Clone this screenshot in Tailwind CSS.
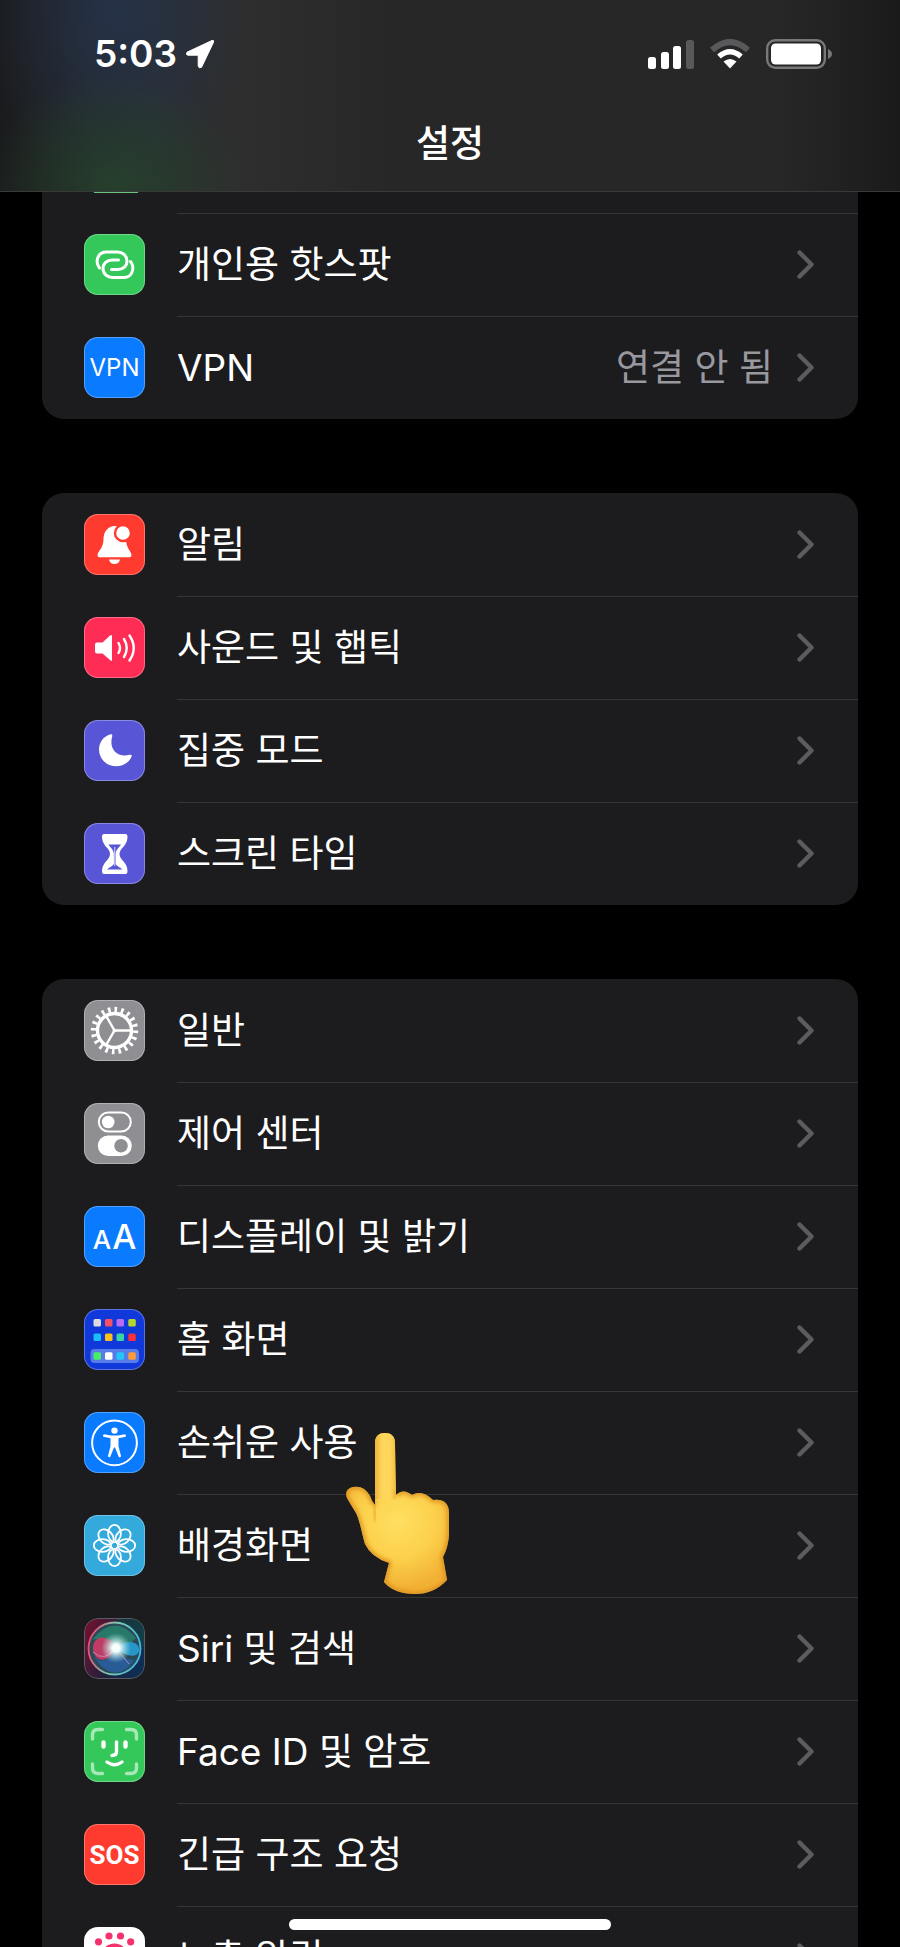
<!DOCTYPE html>
<html lang="ko">
<head>
  <meta charset="UTF-8" />
  <title>설정</title>
  <meta name="viewport" content="width=device-width, initial-scale=1.0" />
  <script src="https://cdn.jsdelivr.net/npm/@tailwindcss/browser@4"></script>
</head>
<body class="bg-black text-white font-['Inter','Noto_Sans_CJK_KR',sans-serif]">

<!-- Shared chevron -->
<svg class="hidden">
  <symbol id="chevron" viewBox="0 0 17 29">
    <path d="M2.5 2.5 14.5 14.5 2.5 26.5" fill="none" stroke="#5c5c60" stroke-width="4.4" stroke-linecap="round" stroke-linejoin="round" />
  </symbol>
</svg>

<div class="relative h-screen overflow-hidden flex flex-col">

  <!-- Header -->
  <header class="shrink-0 border-b border-[#39393a] bg-[radial-gradient(ellipse_130px_110px_at_115px_185px,#26452ccc,transparent),radial-gradient(ellipse_130px_190px_at_115px_10px,#263450cc,transparent),linear-gradient(90deg,#1a1b1d_0px,#1d1f20_30px,#2a2d2e_160px,#2e2e2f_240px,#272728_400px,#272728_780px,#202021_850px,#1a1a1b_100%)]">
    <div class="h-[107px] pl-[94px] pr-[68px] flex items-center">
      <span class="text-[37px] font-semibold">5:03</span>
      <svg class="ml-2 w-[30px] h-[30px]" viewBox="0 0 30 30">
        <path d="M27 1.5 2 13.2Q.5 16 3 16.2H13.2V27Q14 30 16.6 28.2L28.6 3Q29 .8 27 1.5Z" fill="#fff" stroke="#fff" stroke-linejoin="round" />
      </svg>
      <div class="ml-auto flex items-center gap-4">
        <svg class="w-[46px] h-[30px]" viewBox="0 0 46 30" fill="#fff">
          <rect x="0" y="18" width="8" height="12" rx="2.5" />
          <rect x="13" y="13" width="8" height="17" rx="2.5" />
          <rect x="25" y="7" width="8" height="23" rx="2.5" />
          <rect x="38" y="1" width="8" height="29" rx="2.5" fill="#59595b" />
        </svg>
        <svg class="w-10 h-[30px]" viewBox="0 0 40 30" fill="none">
          <path d="M2 11Q20-5 38 11" stroke="#59595b" stroke-width="6" />
          <path d="M9 17.5Q20 8 31 17.5" stroke="#fff" stroke-width="5.5" />
          <path d="M13.5 22.5Q20 17.5 26.5 22.5L20 29.5Z" fill="#fff" />
        </svg>
        <svg class="w-[66px] h-[30px]" viewBox="0 0 66 30">
          <rect x="1.2" y="1.2" width="57.6" height="27.6" rx="8" fill="none" stroke="#78787a" stroke-width="2.4" />
          <rect x="5" y="4.5" width="50" height="21" rx="4.5" fill="#fff" />
          <path d="M62 10Q66 12 66 15T62 20Z" fill="#78787a" />
        </svg>
      </div>
    </div>
    <h1 class="h-[84px] pb-3 flex items-center justify-center text-[37px] font-medium leading-none">설정</h1>
  </header>

  <!-- Settings list -->
  <main class="flex-1 px-[42px] flex flex-col gap-[74px] text-[37px] leading-none">

    <section class="shrink-0 rounded-b-[22px] bg-[#1c1c1e]">
      <!-- row scrolled under the header -->
      <div class="h-[21px] pl-[52px]">
        <div class="w-11 h-px bg-[#6cc080]"></div>
      </div>

      <a href="#" class="flex h-[103px] items-center pl-[42px]">
        <svg class="w-[61px] h-[61px] rounded-[14px] bg-[#34c759] inset-ring inset-ring-white/30" viewBox="0 0 61 61" fill="none" stroke="#fff" stroke-width="3" stroke-linecap="round">
          <path d="M15.5 34C10.5 27.5 14 18 22 18H33C39 18 43 22 43 27C43 32 39 35.5 34 35.5H27.5" />
          <path d="M15.5 34C10.5 27.5 14 18 22 18H33C39 18 43 22 43 27C43 32 39 35.5 34 35.5H27.5" transform="rotate(180 31 30.75)" />
        </svg>
        <span class="ml-8 flex h-full flex-1 items-center border-t border-[#353537] pb-0.5 pr-11">
          개인용 핫스팟
          <svg class="ml-auto w-[17px] h-[29px]"><use href="#chevron" /></svg>
        </span>
      </a>

      <a href="#" class="flex h-[103px] items-center pl-[42px]">
        <span class="flex w-[61px] h-[61px] items-center justify-center rounded-[14px] bg-[#0a7aff] text-[24px] inset-ring inset-ring-white/30">VPN</span>
        <span class="ml-8 flex h-full flex-1 items-center border-t border-[#353537] pb-0.5 pr-11">
          VPN
          <span class="ml-auto mr-6 text-[#98989e]">연결 안 됨</span>
          <svg class="w-[17px] h-[29px]"><use href="#chevron" /></svg>
        </span>
      </a>
    </section>

    <section class="shrink-0 rounded-[22px] bg-[#1c1c1e]">
      <a href="#" class="flex h-[103px] items-center pl-[42px]">
        <svg class="w-[61px] h-[61px] rounded-[14px] bg-[#ff3b30] inset-ring inset-ring-white/30" viewBox="0 0 61 61" fill="#fff">
          <path d="M30.5 12C25 12 19.5 17 19.5 25C19.5 34 14 37 13.5 41Q13.5 43.3 15.5 43.3H45.500Q47.8 43.3 47.5 41C47 37 42 34 42 25V20L36 12Z" />
          <path d="M25 45.5H36C35 51.5 26 51.5 25 45.5Z" />
          <circle cx="39" cy="19" r="8" fill="#fff" stroke="#ff3b30" stroke-width="2.4" />
        </svg>
        <span class="ml-8 flex h-full flex-1 items-center pr-11">
          알림
          <svg class="ml-auto w-[17px] h-[29px]"><use href="#chevron" /></svg>
        </span>
      </a>

      <a href="#" class="flex h-[103px] items-center pl-[42px]">
        <svg class="w-[61px] h-[61px] rounded-[14px] bg-[#ff2d55] inset-ring inset-ring-white/30" viewBox="0 0 61 61" fill="none" stroke="#fff" stroke-width="2.4" stroke-linecap="round">
          <path d="M13 25.5H18.5L26 18.5Q28 17 28 19.5V42.5Q28 45 26 43L18.5 36.5H13Q11 36.5 11 34.5V27.5Q11 25.5 13 25.5Z" fill="#fff" stroke="none" />
          <path d="M34.5 26Q37.5 31 34.5 36M40 22Q45.5 31 40 40M45.5 18.5Q54 31 45.5 43.5" />
        </svg>
        <span class="ml-8 flex h-full flex-1 items-center border-t border-[#353537] pb-0.5 pr-11">
          사운드 및 햅틱
          <svg class="ml-auto w-[17px] h-[29px]"><use href="#chevron" /></svg>
        </span>
      </a>

      <a href="#" class="flex h-[103px] items-center pl-[42px]">
        <svg class="w-[61px] h-[61px] rounded-[14px] bg-[#5856d6] inset-ring inset-ring-white/30" viewBox="0 0 61 61" fill="#fff">
          <path d="M26.5 14.200C14 18 11.5 33 20 41.5C29 50 44 46.5 47.8 36Q47.8 34.2 45.5 34.8C33 38 24.5 29 28.3 16Q28.5 13.8 26.5 14.2Z" />
        </svg>
        <span class="ml-8 flex h-full flex-1 items-center border-t border-[#353537] pb-0.5 pr-11">
          집중 모드
          <svg class="ml-auto w-[17px] h-[29px]"><use href="#chevron" /></svg>
        </span>
      </a>

      <a href="#" class="flex h-[103px] items-center pl-[42px]">
        <svg class="w-[61px] h-[61px] rounded-[14px] bg-[#5856d6] inset-ring inset-ring-white/30" viewBox="0 0 61 61" fill="#fff">
          <path d="M20 11H41.5Q43.5 11 43.5 14C43.5 23 35.5 25 35.5 31S43.5 39 43.5 48Q43.5 51 41.5 51H20Q18 51 18 48C18 39 26 37 26 31S18 23 18 14Q18 11 20 11Z" />
          <path d="M24.5 21.5H37C35 25 32 26 31.6 31V40.5C32 43 36 44 38.5 46.5H23C25.500 44 29.5 43 29.9 40.5V31C29.5 26 26.5 25 24.5 21.5Z" fill="#5856d6" />
          <path d="M30.75 24V43" stroke="#fff" stroke-width=".8" />
        </svg>
        <span class="ml-8 flex h-full flex-1 items-center border-t border-[#353537] pb-0.5 pr-11">
          스크린 타임
          <svg class="ml-auto w-[17px] h-[29px]"><use href="#chevron" /></svg>
        </span>
      </a>
    </section>

    <section class="shrink-0 rounded-t-[22px] bg-[#1c1c1e]">
      <a href="#" class="flex h-[103px] items-center pl-[42px]">
        <svg class="w-[61px] h-[61px] rounded-[14px] bg-[#8e8e93] inset-ring inset-ring-white/30" viewBox="0 0 61 61" fill="none" stroke="#fff">
          <circle cx="30.5" cy="30.5" r="21" stroke-width="5.4" pathLength="40" stroke-dasharray=".8 1.2" />
          <circle cx="30.5" cy="30.5" r="17" stroke-width="3.400" />
          <path d="M30.5 30.5H48M30.5 30.5 21.75 15.35M30.5 30.5 21.75 45.65" stroke-width="2.4" />
          <circle cx="30.5" cy="30.5" r="1.5" fill="#fff" />
        </svg>
        <span class="ml-8 flex h-full flex-1 items-center pr-11">
          일반
          <svg class="ml-auto w-[17px] h-[29px]"><use href="#chevron" /></svg>
        </span>
      </a>

      <a href="#" class="flex h-[103px] items-center pl-[42px]">
        <svg class="w-[61px] h-[61px] rounded-[14px] bg-[#8e8e93] inset-ring inset-ring-white/30" viewBox="0 0 61 61" fill="#fff">
          <rect x="14.8" y="9.5" width="32" height="19" rx="9.5" fill="none" stroke="#fff" stroke-width="2" />
          <circle cx="24.2" cy="19" r="6.3" />
          <rect x="13.8" y="32.5" width="34" height="20.5" rx="10.25" />
          <circle cx="37" cy="42.75" r="6.8" fill="#8e8e93" />
        </svg>
        <span class="ml-8 flex h-full flex-1 items-center border-t border-[#353537] pb-0.5 pr-11">
          제어 센터
          <svg class="ml-auto w-[17px] h-[29px]"><use href="#chevron" /></svg>
        </span>
      </a>

      <a href="#" class="flex h-[103px] items-center pl-[42px]">
        <span class="flex w-[61px] h-[61px] items-baseline justify-center gap-px rounded-[14px] bg-[#0a7aff] pt-[14px] font-medium inset-ring inset-ring-white/30">
          <span class="text-[26px]">A</span><span class="text-[34px]">A</span>
        </span>
        <span class="ml-8 flex h-full flex-1 items-center border-t border-[#353537] pb-0.5 pr-11">
          디스플레이 및 밝기
          <svg class="ml-auto w-[17px] h-[29px]"><use href="#chevron" /></svg>
        </span>
      </a>

      <a href="#" class="flex h-[103px] items-center pl-[42px]">
        <svg class="w-[61px] h-[61px] rounded-[14px] bg-[#1138d8] inset-ring inset-ring-white/30" viewBox="0 0 61 61">
          <rect x="6.5" y="40" width="48.5" height="14" rx="4" fill="#567cea" />
          <rect x="9.5" y="10" width="7.5" height="7.5" rx="1.5" fill="#dcdce0" />
          <rect x="21" y="10" width="7.5" height="7.5" rx="1.5" fill="#fc4f60" />
          <rect x="32.5" y="10" width="7.5" height="7.5" rx="1.5" fill="#b86cf5" />
          <rect x="44.3" y="10" width="7.5" height="7.5" rx="1.5" fill="#b5d62f" />
          <rect x="9.5" y="24.5" width="7.5" height="7.5" rx="1.5" fill="#19bdf8" />
          <rect x="21" y="24.5" width="7.5" height="7.5" rx="1.5" fill="#fdc019" />
          <rect x="32.5" y="24.5" width="7.5" height="7.5" rx="1.5" fill="#34d6a3" />
          <rect x="44.3" y="24.5" width="7.5" height="7.5" rx="1.5" fill="#fc3038" />
          <rect x="9.5" y="43.3" width="7.5" height="7.5" rx="1.5" fill="#46ee6a" />
          <rect x="21" y="43.3" width="7.5" height="7.5" rx="1.5" fill="#fff" />
          <rect x="32.5" y="43.3" width="7.5" height="7.5" rx="1.5" fill="#22c6fb" />
          <rect x="44.3" y="43.3" width="7.5" height="7.5" rx="1.5" fill="#fd9a3c" />
        </svg>
        <span class="ml-8 flex h-full flex-1 items-center border-t border-[#353537] pb-0.5 pr-11">
          홈 화면
          <svg class="ml-auto w-[17px] h-[29px]"><use href="#chevron" /></svg>
        </span>
      </a>

      <a href="#" class="relative flex h-[103px] items-center pl-[42px]">
        <svg class="w-[61px] h-[61px] rounded-[14px] bg-[#0a7aff] inset-ring inset-ring-white/30" viewBox="0 0 61 61" fill="#fff">
          <circle cx="30.5" cy="30.8" r="22.4" fill="none" stroke="#fff" stroke-width="2" />
          <circle cx="30.5" cy="18.6" r="3.2" />
          <path d="M20 22.300 27 23.5H34L41 22.3Q43 23.5 41.5 24.8L34.500 26.3V34L37 44Q36.5 46 34.8 45L31 35.5H30L26.2 45Q24.5 46 24 44L26.500 34V26.3L19.5 24.8Q18 23.5 20 22.3Z" />
        </svg>
        <span class="ml-8 flex h-full flex-1 items-center border-t border-[#353537] pb-0.5 pr-11">
          손쉬운 사용
          <svg class="ml-auto w-[17px] h-[29px]"><use href="#chevron" /></svg>
        </span>

        <!-- Pointing hand over the list -->
        <svg class="absolute left-[304px] top-[42px] z-10 w-[104px] h-[161px]" viewBox="0 0 104 161">
          <defs>
            <radialGradient id="skin" gradientUnits="userSpaceOnUse" cx="52" cy="88" r="68">
              <stop offset="0" stop-color="#ffdf62" />
              <stop offset=".55" stop-color="#fcd04b" />
              <stop offset="1" stop-color="#f2b034" />
            </radialGradient>
            <linearGradient id="finger" x1="0" x2="1">
              <stop offset="0" stop-color="#eeb438" />
              <stop offset=".35" stop-color="#fdd75b" />
              <stop offset=".75" stop-color="#fdd55a" />
              <stop offset="1" stop-color="#f4bf42" />
            </linearGradient>
            <filter id="soft"><feGaussianBlur stdDeviation="2" /></filter>
            <clipPath id="hand">
              <path d="M29 72V10C29 3 33 0 39 0S49 3 49 10L50 62Q57 55 66 62Q76 56 87 67Q102 65 103 79V102Q102 115 97 124L101 147Q88 161 69 161Q48 161 38 149L43 130Q25 124 19 111C16 101 14 88 10 80Q5 72 1 65Q-2 56 7 54Q18 52 24 63Q26 69 29 72Z" />
            </clipPath>
          </defs>
          <g clip-path="url(#hand)">
            <rect width="104" height="161" fill="url(#skin)" />
            <rect x="29" width="20.5" height="66" fill="url(#finger)" />
            <path d="M50 62Q57 55 66 62Q76 56 87 67Q102 65 103 79V102Q102 115 97 124L101 147Q88 161 69 161Q48 161 38 149L43 130Q25 124 19 111C16 101 14 88 10 80Q5 72 1 65Q-2 56 7 54Q18 52 24 63Q26 69 29 72" fill="none" stroke="#d98d1c" stroke-width="4" filter="url(#soft)" />
            <path d="M28 70Q31 78 29 88" fill="none" stroke="#e5a32b" stroke-width="3" filter="url(#soft)" />
          </g>
        </svg>
      </a>

      <a href="#" class="flex h-[103px] items-center pl-[42px]">
        <svg class="w-[61px] h-[61px] rounded-[14px] bg-[#34aadc] inset-ring inset-ring-white/30" viewBox="0 0 61 61" fill="none" stroke="#fff" stroke-width="1.8">
          <ellipse cx="30.5" cy="18.5" rx="6.4" ry="8.7" />
          <ellipse cx="30.5" cy="18.5" rx="6.4" ry="8.7" transform="rotate(45 30.5 30.5)" />
          <ellipse cx="30.5" cy="18.5" rx="6.4" ry="8.7" transform="rotate(90 30.5 30.5)" />
          <ellipse cx="30.5" cy="18.5" rx="6.4" ry="8.7" transform="rotate(135 30.5 30.5)" />
          <ellipse cx="30.5" cy="18.5" rx="6.4" ry="8.7" transform="rotate(180 30.5 30.5)" />
          <ellipse cx="30.5" cy="18.5" rx="6.4" ry="8.7" transform="rotate(225 30.5 30.5)" />
          <ellipse cx="30.5" cy="18.5" rx="6.4" ry="8.7" transform="rotate(270 30.5 30.5)" />
          <ellipse cx="30.5" cy="18.5" rx="6.4" ry="8.7" transform="rotate(315 30.5 30.5)" />
        </svg>
        <span class="ml-8 flex h-full flex-1 items-center border-t border-[#353537] pb-0.5 pr-11">
          배경화면
          <svg class="ml-auto w-[17px] h-[29px]"><use href="#chevron" /></svg>
        </span>
      </a>

      <a href="#" class="flex h-[103px] items-center pl-[42px]">
        <svg class="w-[61px] h-[61px] rounded-[14px]" viewBox="0 0 61 61">
          <defs>
            <linearGradient id="siriBack" x1="0" y1=".3" x2="1" y2=".7">
              <stop offset="0" stop-color="#6b1230" />
              <stop offset=".5" stop-color="#20203c" />
              <stop offset="1" stop-color="#0e2f54" />
            </linearGradient>
            <linearGradient id="siriRing" x1="0" y1=".4" x2="1" y2=".6">
              <stop offset="0" stop-color="#f0476f" />
              <stop offset=".45" stop-color="#7cc9b0" />
              <stop offset="1" stop-color="#3fb6e8" />
            </linearGradient>
            <radialGradient id="siriGlow">
              <stop offset="0" stop-color="#fff" />
              <stop offset=".25" stop-color="#f2fffd" />
              <stop offset="1" stop-color="#9fe0dc" stop-opacity="0" />
            </radialGradient>
          </defs>
          <rect x=".5" y=".5" width="60" height="60" rx="13.5" fill="url(#siriBack)" stroke="#5b5b66" />
          <path d="M32 1H47Q60 1 60 14V30Z" fill="#0f5040" opacity=".5" />
          <circle cx="30.5" cy="30.5" r="26" fill="#2a4a58" stroke="url(#siriRing)" stroke-width="1.8" />
          <path d="M8 22Q30-6 52 20Q44 28 32 30Q20 18 8 22Z" fill="#27836c" opacity=".85" />
          <path d="M32 30C24 14 8 18 9 31S24 47 32 30Z" fill="#d83a68" opacity=".85" />
          <path d="M32 31C24 46 14 44 10 38Q20 57 36 54Q46 50 50 42Q38 42 32 31Z" fill="#2760a8" opacity=".8" />
          <path d="M32 30C40 22 54 22 55 31S42 40 32 30Z" fill="#26a4dc" opacity=".85" />
          <path d="M9 34Q20 45 32 30L45 46" fill="none" stroke="#d9a4d8" stroke-width="1" opacity=".7" />
          <circle cx="32" cy="30" r="15" fill="url(#siriGlow)" />
        </svg>
        <span class="ml-8 flex h-full flex-1 items-center border-t border-[#353537] pb-0.5 pr-11">
          Siri 및 검색
          <svg class="ml-auto w-[17px] h-[29px]"><use href="#chevron" /></svg>
        </span>
      </a>

      <a href="#" class="flex h-[103px] items-center pl-[42px]">
        <svg class="w-[61px] h-[61px] rounded-[14px] bg-[#34c759] inset-ring inset-ring-white/30" viewBox="0 0 61 61" fill="none" stroke="#fff" stroke-width="3.4" stroke-linecap="round">
          <path d="M8.5 18V14Q8.5 8.5 14 8.5H18.5M42.5 8.5H47Q52.5 8.5 52.5 14V18M52.5 43V47Q52.5 52.5 47 52.5H42.5M18.5 52.5H14Q8.5 52.5 8.5 47V43" stroke="#a7e8b7" />
          <path d="M19.5 21.5V25.5M41.5 21.5V25.5" stroke-width="4.4" />
          <path d="M32.5 21V31Q32.5 34.5 28 34.5M23 41Q30.5 46.5 38 41" />
        </svg>
        <span class="ml-8 flex h-full flex-1 items-center border-t border-[#353537] pb-0.5 pr-11">
          Face ID 및 암호
          <svg class="ml-auto w-[17px] h-[29px]"><use href="#chevron" /></svg>
        </span>
      </a>

      <a href="#" class="flex h-[103px] items-center pl-[42px]">
        <span class="flex w-[61px] h-[61px] items-center justify-center rounded-[14px] bg-[#ff3b30] font-['Roboto',sans-serif] text-[26px] font-bold inset-ring inset-ring-white/30">SOS</span>
        <span class="ml-8 flex h-full flex-1 items-center border-t border-[#353537] pb-0.5 pr-11">
          긴급 구조 요청
          <svg class="ml-auto w-[17px] h-[29px]"><use href="#chevron" /></svg>
        </span>
      </a>

      <a href="#" class="flex h-[103px] items-center pl-[42px]">
        <svg class="w-[61px] h-[61px] rounded-[14px] bg-white" viewBox="0 0 61 61" fill="#f5326e">
          <circle cx="25" cy="9" r="3.6" />
          <circle cx="36.5" cy="9" r="3.6" />
          <circle cx="14.5" cy="14.8" r="3.6" />
          <circle cx="46.7" cy="14.8" r="3.6" />
          <circle cx="30.5" cy="30.5" r="14" />
        </svg>
        <span class="ml-8 flex h-full flex-1 items-center border-t border-[#353537] pb-0.5 pr-11">
          노출 알림
          <svg class="ml-auto w-[17px] h-[29px]"><use href="#chevron" /></svg>
        </span>
      </a>
    </section>
  </main>

  <!-- Home indicator -->
  <div class="absolute bottom-[17px] left-1/2 z-20 h-[11px] w-[322px] -translate-x-1/2 rounded-full bg-white"></div>
</div>

</body>
</html>
